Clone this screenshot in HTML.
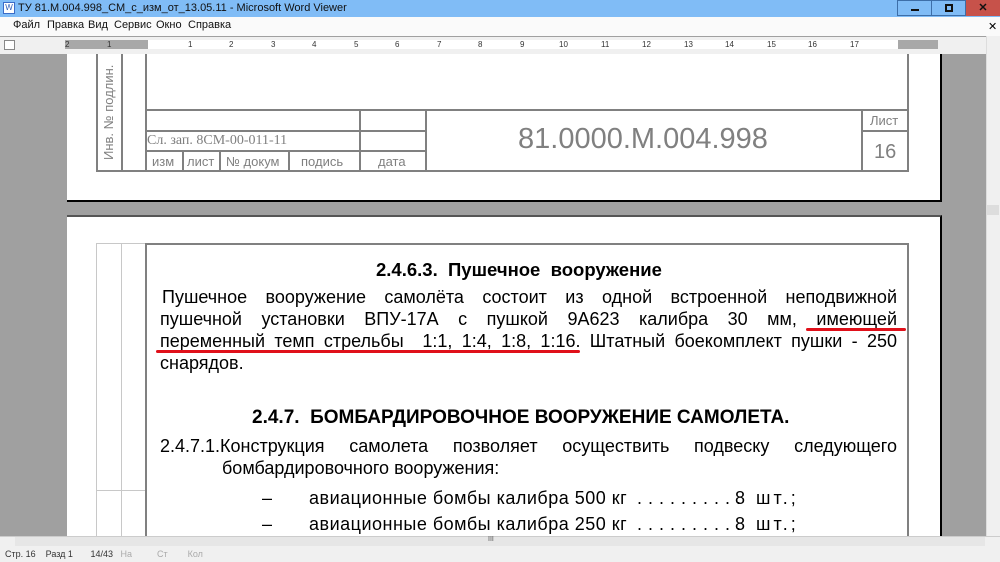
<!DOCTYPE html><html><head><meta charset="utf-8"><style>
*{margin:0;padding:0;box-sizing:border-box}
body{width:1000px;height:562px;overflow:hidden;background:#a0a0a0;font-family:"Liberation Sans",Arial,sans-serif;position:relative}
.a{position:absolute}
.t{font-size:18px;color:#000;white-space:nowrap}
.j{text-align:justify;text-align-last:justify;white-space:normal}
.g{color:#808080}
.n{position:absolute;top:40px;font-size:8px;color:#333}
.m{position:absolute;top:19px;font-size:11px;color:#111}
</style></head><body>
<div class="a" style="left:0;top:0;width:1000px;height:17px;background:#80bcf6"></div>
<div class="a" style="left:3px;top:2px;width:12px;height:12px;background:#fff;border:1px solid #3a6cc8;font-size:8px;color:#2b5cb8;text-align:center;line-height:10px">W</div>
<div class="a" style="left:18px;top:2px;font-size:11px;color:#111">ТУ 81.М.004.998_СМ_с_изм_от_13.05.11 - Microsoft Word Viewer</div>
<div class="a" style="left:897px;top:0;width:35px;height:16px;border:1px solid #3d6ea8;background:#80bcf6"><div class="a" style="left:13px;top:8px;width:8px;height:2px;background:#111"></div></div>
<div class="a" style="left:931px;top:0;width:35px;height:16px;border:1px solid #3d6ea8;background:#80bcf6"><div class="a" style="left:13px;top:3px;width:8px;height:8px;border:2px solid #111"></div></div>
<div class="a" style="left:966px;top:0;width:34px;height:16px;background:#c7524a;color:#111;font-size:11px;text-align:center;line-height:16px;font-weight:bold">✕</div>
<div class="a" style="left:0;top:17px;width:1000px;height:19px;background:#fafafa"></div>
<div class="m" style="left:13px">Файл</div><div class="m" style="left:47px">Правка</div><div class="m" style="left:88px">Вид</div><div class="m" style="left:114px">Сервис</div><div class="m" style="left:156px">Окно</div><div class="m" style="left:188px">Справка</div>
<div class="a" style="left:988px;top:20px;font-size:11px">✕</div>
<div class="a" style="left:0;top:36px;width:1000px;height:18px;background:#f0f0f0;border-top:1px solid #a0a0a0"></div>
<div class="a" style="left:4px;top:40px;width:11px;height:10px;border:1px solid #888;background:#fff"></div>
<div class="a" style="left:65px;top:40px;width:83px;height:9px;background:#a8a8a8"></div>
<div class="a" style="left:148px;top:40px;width:750px;height:9px;background:#fff"></div>
<div class="a" style="left:898px;top:40px;width:40px;height:9px;background:#a8a8a8"></div>
<div class="n" style="left:65px">2</div><div class="n" style="left:107px">1</div>
<div class="n" style="left:188px">1</div><div class="n" style="left:229px">2</div><div class="n" style="left:271px">3</div><div class="n" style="left:312px">4</div><div class="n" style="left:354px">5</div><div class="n" style="left:395px">6</div><div class="n" style="left:437px">7</div><div class="n" style="left:478px">8</div><div class="n" style="left:520px">9</div><div class="n" style="left:559px">10</div><div class="n" style="left:601px">11</div><div class="n" style="left:642px">12</div><div class="n" style="left:684px">13</div><div class="n" style="left:725px">14</div><div class="n" style="left:767px">15</div><div class="n" style="left:808px">16</div><div class="n" style="left:850px">17</div>
<div class="a" style="left:986px;top:36px;width:14px;height:500px;background:#f0f0f0;border-left:1px solid #ddd"></div>
<div class="a" style="left:987px;top:205px;width:12px;height:10px;background:#ddd"></div>
<!-- page 1 -->
<div class="a" style="left:67px;top:54px;width:875px;height:148px;background:#fff;border-right:2px solid #000;border-bottom:2px solid #000"></div>
<div class="a" style="left:96px;top:54px;width:813px;height:118px;border:2px solid #808080;border-top:none"></div>
<div class="a" style="left:121px;top:54px;width:2px;height:118px;background:#808080"></div>
<div class="a" style="left:145px;top:54px;width:2px;height:118px;background:#808080"></div>
<div class="a" style="left:145px;top:109px;width:764px;height:2px;background:#808080"></div>
<div class="a" style="left:145px;top:130px;width:281px;height:2px;background:#808080"></div>
<div class="a" style="left:145px;top:150px;width:281px;height:2px;background:#808080"></div>
<div class="a" style="left:359px;top:110px;width:2px;height:62px;background:#808080"></div>
<div class="a" style="left:425px;top:110px;width:2px;height:62px;background:#808080"></div>
<div class="a" style="left:861px;top:110px;width:2px;height:62px;background:#808080"></div>
<div class="a" style="left:861px;top:130px;width:48px;height:2px;background:#808080"></div>
<div class="a" style="left:182px;top:151px;width:2px;height:21px;background:#808080"></div>
<div class="a" style="left:219px;top:151px;width:2px;height:21px;background:#808080"></div>
<div class="a" style="left:288px;top:151px;width:2px;height:21px;background:#808080"></div>
<div class="a g" style="left:101px;top:160px;font-size:13px;transform:rotate(-90deg);transform-origin:0 0;white-space:nowrap">Инв. № подлин.</div>
<div class="a g" style="left:147px;top:133px;font-size:14px;font-family:'Liberation Serif',serif">Сл. зап. 8СМ-00-011-11</div>
<div class="a g" style="left:152px;top:154px;font-size:13px">изм</div>
<div class="a g" style="left:187px;top:154px;font-size:13px">лист</div>
<div class="a g" style="left:226px;top:154px;font-size:13px">№ докум</div>
<div class="a g" style="left:301px;top:154px;font-size:13px">подись</div>
<div class="a g" style="left:378px;top:154px;font-size:13px">дата</div>
<div class="a g" style="left:518px;top:123px;font-size:29px">81.0000.М.004.998</div>
<div class="a g" style="left:870px;top:113px;font-size:13px">Лист</div>
<div class="a g" style="left:874px;top:141px;font-size:20px">16</div>
<!-- page 2 -->
<div class="a" style="left:67px;top:215px;width:875px;height:330px;background:#fff;border-top:2px solid #555;border-right:2px solid #000"></div>
<div class="a" style="left:96px;top:243px;width:1px;height:300px;background:#c8c8c8"></div>
<div class="a" style="left:96px;top:243px;width:50px;height:1px;background:#c8c8c8"></div>
<div class="a" style="left:121px;top:243px;width:1px;height:300px;background:#c8c8c8"></div>
<div class="a" style="left:96px;top:490px;width:50px;height:1px;background:#c8c8c8"></div>
<div class="a" style="left:145px;top:243px;width:2px;height:300px;background:#808080"></div>
<div class="a" style="left:145px;top:243px;width:764px;height:2px;background:#808080"></div>
<div class="a" style="left:907px;top:243px;width:2px;height:300px;background:#808080"></div>
<div class="a t" style="left:376px;top:259px;font-weight:bold;font-size:18.5px">2.4.6.3.&nbsp; Пушечное&nbsp; вооружение</div>
<div class="a t j" style="left:162px;top:287px;width:735px">Пушечное вооружение самолёта состоит из одной встроенной неподвижной</div>
<div class="a t j" style="left:160px;top:309px;width:737px">пушечной установки ВПУ-17А с пушкой 9А623 калибра 30 мм, имеющей</div>
<div class="a t j" style="left:160px;top:331px;width:737px">переменный темп стрельбы &nbsp;1:1, 1:4, 1:8, 1:16. Штатный боекомплект пушки - 250</div>
<div class="a t" style="left:160px;top:353px">снарядов.</div>
<div class="a" style="left:806px;top:328px;width:100px;height:3px;background:#e0101a;border-radius:2px"></div>
<div class="a" style="left:156px;top:350px;width:424px;height:3px;background:#e0101a;border-radius:2px"></div>
<div class="a t" style="left:252px;top:407px;font-weight:bold;font-size:19px">2.4.7.&nbsp; БОМБАРДИРОВОЧНОЕ ВООРУЖЕНИЕ САМОЛЕТА.</div>
<div class="a t j" style="left:160px;top:436px;width:737px">2.4.7.1.Конструкция самолета позволяет осуществить подвеску следующего</div>
<div class="a t" style="left:222px;top:458px">бомбардировочного вооружения:</div>
<div class="a t" style="left:262px;top:488px">–</div><div class="a t" style="left:309px;top:488px;letter-spacing:0.5px">авиационные бомбы калибра 500 кг</div><div class="a t" style="left:637px;top:488px;letter-spacing:0.5px">. . . . . . . . . .</div><div class="a t" style="left:735px;top:488px;letter-spacing:3px">8 шт.;</div>
<div class="a t" style="left:262px;top:514px">–</div><div class="a t" style="left:309px;top:514px;letter-spacing:0.5px">авиационные бомбы калибра 250 кг</div><div class="a t" style="left:637px;top:514px;letter-spacing:0.5px">. . . . . . . . . .</div><div class="a t" style="left:735px;top:514px;letter-spacing:3px">8 шт.;</div>
<div class="a" style="left:0;top:536px;width:1000px;height:11px;background:#f0f0f0;border-top:1px solid #ccc"></div>
<div class="a" style="left:15px;top:537px;width:970px;height:9px;background:#e6e6e6"></div>
<div class="a" style="left:488px;top:536px;font-size:7px;color:#555">III</div>
<div class="a" style="left:0;top:547px;width:1000px;height:15px;background:#f0f0f0"></div>
<div class="a" style="left:5px;top:549px;font-size:9px;color:#333;white-space:pre">Стр. 16    Разд 1       14/43   <span style="color:#aaa">На          Ст        Кол</span></div>
</body></html>
